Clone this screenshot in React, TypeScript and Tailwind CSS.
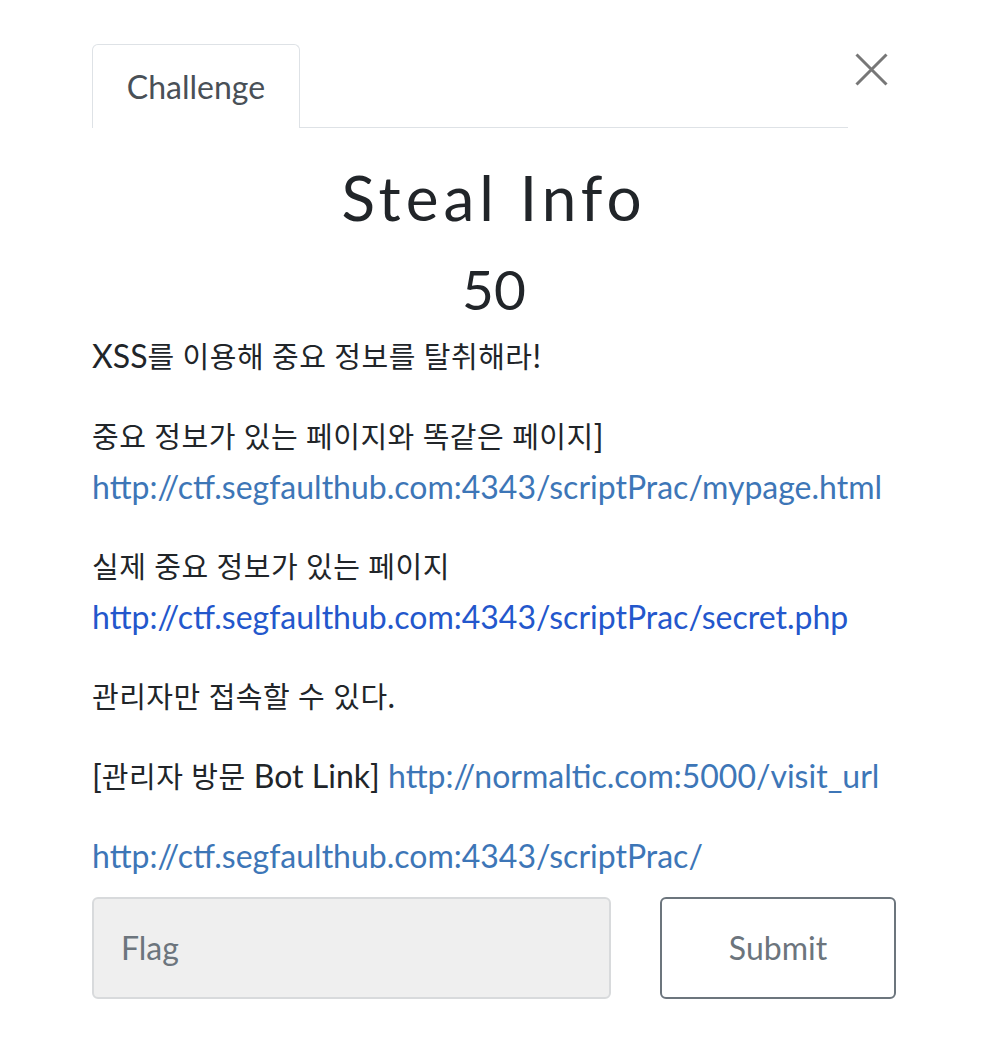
import React from "react";

const font = { fontFamily: 'Lato, "Noto Sans CJK KR", sans-serif' };

function K({ children }: { children: React.ReactNode }) {
  return <span className="text-[29px] tracking-[0.5px]">{children}</span>;
}

export default function App() {
  return (
    <div className="min-h-[1044px] bg-white text-[#212529]" style={font}>
      <div className="mx-[92px] pt-[44px]">
        <div className="flex items-start">
          <div className="flex flex-1 items-end">
            <div className="flex h-[84px] w-[208px] items-center justify-center rounded-t-[6px] border-x border-t border-[#dee2e6] bg-white text-[32px] text-[#495057]">
              Challenge
            </div>
            <div className="h-px flex-1 bg-[#dee2e6]" />
          </div>
          <button className="ml-[7px] mr-[8px] mt-[9px] flex h-[33px] w-[33px] items-center justify-center text-[#777]">
            <svg width="33" height="33" viewBox="0 0 33 33" fill="none" stroke="currentColor" strokeWidth="3">
              <path d="M1.5 1.5 L31.5 31.5 M31.5 1.5 L1.5 31.5" />
            </svg>
          </button>
        </div>

        <h3 className="mt-[32px] text-center text-[62px] leading-[74px] tracking-[5px]">Steal Info</h3>
        <h4 className="mt-[24px] text-center text-[55px] leading-[62px]">50</h4>

        <div className="mt-[11px] text-[32px] leading-[50px]">
          <p className="mb-[29px]">
            XSS<K>를 이용해 중요 정보를 탈취해라</K>!
          </p>
          <p className="mb-[29px]">
            <K>중요 정보가 있는 페이지와 똑같은 페이지</K>]
            <br />
            <a className="text-[#3d76b7]">http://ctf.segfaulthub.com:4343/scriptPrac/mypage.html</a>
          </p>
          <p className="mb-[29px]">
            <K>실제 중요 정보가 있는 페이지</K>
            <br />
            <a className="text-[#2357cc]">http://ctf.segfaulthub.com:4343/scriptPrac/secret.php</a>
          </p>
          <p className="mb-[29px]">
            <K>관리자만 접속할 수 있다</K>.
          </p>
          <p className="mb-[29px]">
            [<K>관리자 방문</K> Bot Link] <a className="text-[#3d76b7]">http://normaltic.com:5000/visit_url</a>
          </p>
          <p>
            <a className="text-[#3d76b7]">http://ctf.segfaulthub.com:4343/scriptPrac/</a>
          </p>
        </div>

        <div className="mt-[16px] flex gap-[49px]">
          <div className="flex h-[102px] w-[519px] items-center rounded-[6px] border-2 border-[#d8dadc] bg-[#efefef] px-[27px] text-[32px] text-[#6c757d]">
            Flag
          </div>
          <button className="flex h-[102px] flex-1 items-center justify-center rounded-[6px] border-2 border-[#6c757d] bg-white text-[32px] text-[#6c757d]">
            Submit
          </button>
        </div>
      </div>
    </div>
  );
}
